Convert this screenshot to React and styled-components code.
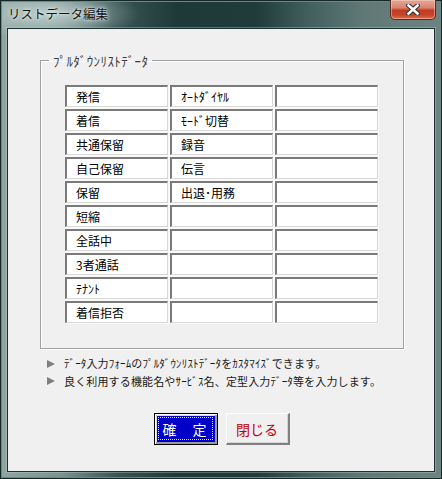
import React from 'react';
import styled, { createGlobalStyle } from 'styled-components';

const GlobalStyle = createGlobalStyle`
  html, body {
    margin: 0;
    padding: 0;
    background: #234140;
  }
  body {
    font-family: "Noto Sans CJK JP", "Noto Sans", sans-serif;
  }
`;

const rows = [
  ['発信', 'ｵｰﾄﾀﾞｲﾔﾙ', ''],
  ['着信', 'ﾓｰﾄﾞ切替', ''],
  ['共通保留', '録音', ''],
  ['自己保留', '伝言', ''],
  ['保留', '出退･用務', ''],
  ['短縮', '', ''],
  ['全話中', '', ''],
  ['3者通話', '', ''],
  ['ﾃﾅﾝﾄ', '', ''],
  ['着信拒否', '', ''],
];

const notes = [
  'ﾃﾞｰﾀ入力ﾌｫｰﾑのﾌﾟﾙﾀﾞｳﾝﾘｽﾄﾃﾞｰﾀをｶｽﾀﾏｲｽﾞできます。',
  '良く利用する機能名やｻｰﾋﾞｽ名、定型入力ﾃﾞｰﾀ等を入力します。',
];

function App() {
  return (
    <>
      <GlobalStyle />
      <Window>
        <TitleBar>
          <Title>リストデータ編集</Title>
          <CloseButton aria-label="close">
            <svg width="14" height="11" viewBox="0 0 14 11">
              <path
                d="M2.5 1.5 L11.5 9.5 M11.5 1.5 L2.5 9.5"
                stroke="#2e2e2e"
                strokeWidth="4.6"
                strokeLinecap="square"
              />
              <path
                d="M2.5 1.5 L11.5 9.5 M11.5 1.5 L2.5 9.5"
                stroke="#ffffff"
                strokeWidth="2.6"
                strokeLinecap="square"
              />
            </svg>
          </CloseButton>
        </TitleBar>
        <Client>
          <Group>
            <Legend>ﾌﾟﾙﾀﾞｳﾝﾘｽﾄﾃﾞｰﾀ</Legend>
            <Table>
              {rows.map((row, i) =>
                row.map((text, j) => <Cell key={`${i}-${j}`}>{text}</Cell>)
              )}
            </Table>
          </Group>
          <Notes>
            {notes.map((n) => (
              <Note key={n}>
                <Arrow />
                {n}
              </Note>
            ))}
          </Notes>
          <Buttons>
            <OkButton>
              <Focus>確　定</Focus>
            </OkButton>
            <CloseDialogButton>閉じる</CloseDialogButton>
          </Buttons>
        </Client>
      </Window>
    </>
  );
}

const Window = styled.div`
  width: 442px;
  height: 479px;
  box-sizing: border-box;
  display: flex;
  flex-direction: column;
  padding: 0 7px 7px;
  background:
    radial-gradient(ellipse 90px 26px at 50px 14px, rgba(205, 220, 218, 0.75), rgba(205, 220, 218, 0) 100%),
    linear-gradient(90deg,
      #8fa6a3 0%, #7a9391 14%, #3a5755 26%, #1d3a39 40%,
      #1f3c3b 58%, #42605e 70%, #5f7876 82%, #6c8381 100%);
  box-shadow: inset 0 0 0 1px #142826, inset 0 0 0 2px #6e8886;
`;

const TitleBar = styled.div`
  height: 28px;
  display: flex;
  justify-content: space-between;
  align-items: flex-start;
`;

const Title = styled.div`
  margin: 6px 0 0 1px;
  font-size: 12.5px;
  line-height: 16px;
  color: #111111;
  text-shadow: 0 0 5px #eef4f3, 0 0 2px #eef4f3;
`;

const CloseButton = styled.div`
  width: 46px;
  height: 20px;
  box-sizing: border-box;
  margin-right: -1px;
  display: flex;
  align-items: center;
  justify-content: center;
  border: 1px solid #5a2a22;
  border-top: none;
  border-radius: 0 0 5px 5px;
  background: linear-gradient(180deg, #e3a897 0%, #d98570 40%, #bf3b22 55%, #c9452a 80%, #e07050 100%);
  box-shadow: inset 0 0 0 1px rgba(255, 220, 210, 0.45);
`;

const Client = styled.div`
  flex: 1;
  display: flex;
  flex-direction: column;
  background: #f0f0f0;
  border: 1px solid #18302f;
  box-shadow: 0 0 0 1px rgba(200, 215, 213, 0.35);
`;

const Group = styled.fieldset`
  box-sizing: border-box;
  width: 364px;
  height: 296px;
  margin: 24px 0 0 32px;
  padding: 17px 0 0 24px;
  border: 1px solid #a0a0a0;
  box-shadow: 1px 1px 0 #ffffff, inset 1px 1px 0 #ffffff;
  min-width: 0;
`;

const Legend = styled.legend`
  margin-left: -16px;
  padding: 0 4px;
  font-size: 13px;
  line-height: 15px;
  letter-spacing: 0.4px;
  color: #3a3a3a;
`;

const Table = styled.div`
  display: grid;
  grid-template-columns: repeat(3, 103px);
  grid-auto-rows: 22px;
  gap: 2px;
  width: max-content;
  padding: 0 1px 1px 0;
  background: #fafafa;
`;

const Cell = styled.div`
  box-sizing: border-box;
  padding-left: 9px;
  background: #ffffff;
  border-top: 2px solid #7a7a7a;
  border-left: 2px solid #7a7a7a;
  border-right: 1px solid #d8d8d8;
  border-bottom: 1px solid #d8d8d8;
  font-size: 12px;
  line-height: 19px;
  color: #000000;
  white-space: nowrap;
`;

const Notes = styled.div`
  margin: 6px 0 0 39px;
  display: flex;
  flex-direction: column;
`;

const Note = styled.div`
  display: flex;
  align-items: center;
  gap: 9px;
  font-size: 11px;
  line-height: 17.5px;
  letter-spacing: 0.15px;
  color: #1a1a1a;
  white-space: nowrap;
`;

const Arrow = styled.span`
  width: 0;
  height: 0;
  border-left: 8px solid #7f7f7f;
  border-top: 4px solid transparent;
  border-bottom: 4px solid transparent;
`;

const Buttons = styled.div`
  margin-top: 23px;
  display: flex;
  justify-content: center;
  gap: 8px;
  padding-left: 1px;
`;

const OkButton = styled.div`
  width: 64px;
  height: 32px;
  box-sizing: border-box;
  border: 1px solid #000000;
  display: flex;
  background: #0000c8;
  box-shadow: inset 1px 1px 0 #ffffff, inset -2px -2px 0 #9a9a9a, inset 2px 2px 0 #d8d8d8;
  padding: 3px 4px 4px 3px;
`;

const Focus = styled.div`
  flex: 1;
  display: flex;
  align-items: center;
  justify-content: center;
  border: 1px dotted #ffff00;
  color: #ffffff;
  font-size: 14px;
  letter-spacing: 1px;
`;

const CloseDialogButton = styled.div`
  width: 64px;
  height: 32px;
  box-sizing: border-box;
  display: flex;
  align-items: center;
  justify-content: center;
  background: #f0f0f0;
  border-top: 1px solid #ffffff;
  border-left: 1px solid #ffffff;
  border-right: 2px solid #808080;
  border-bottom: 2px solid #808080;
  box-shadow: inset -1px -1px 0 #d4d4d4;
  color: #c00000;
  font-size: 14px;
`;

export default App;
